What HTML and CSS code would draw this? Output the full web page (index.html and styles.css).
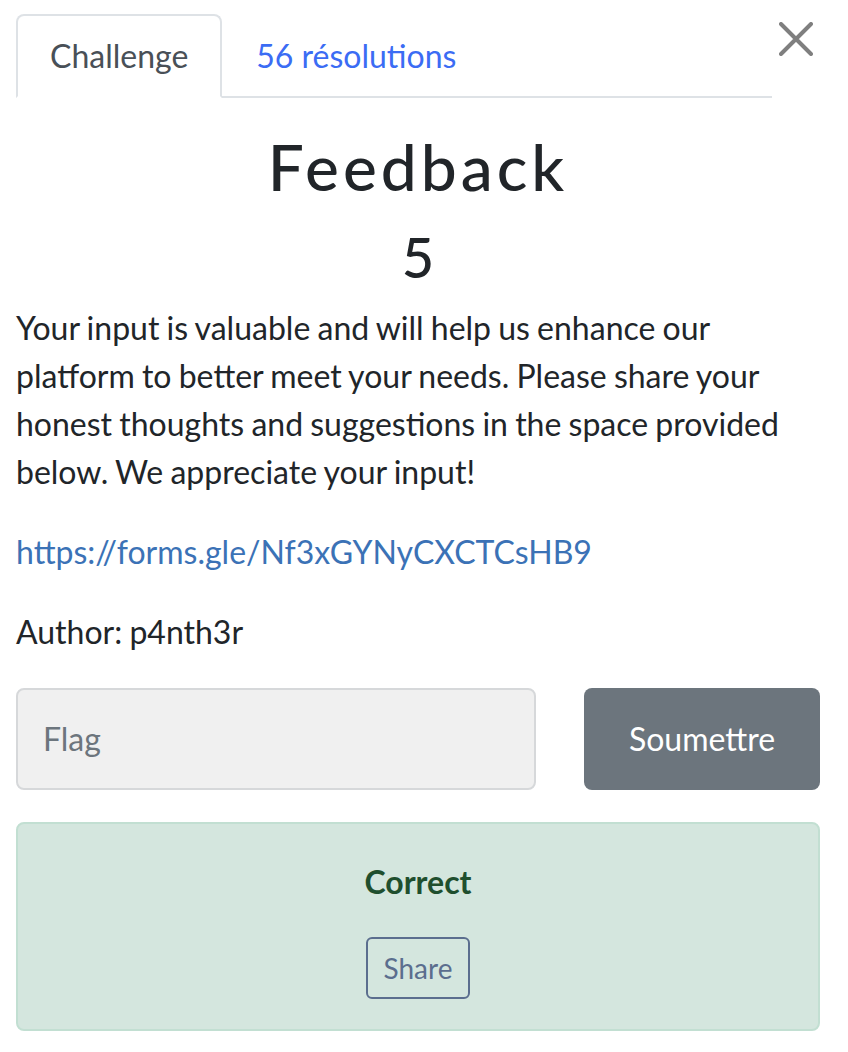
FILE: index.html
```html
<!DOCTYPE html>
<html lang="fr">
<head>
<meta charset="utf-8">
<title>Feedback</title>
<link rel="stylesheet" href="styles.css">
</head>
<body>
<div class="modal">
  <div class="top">
    <ul class="tabs">
      <li class="tab active">Challenge</li>
      <li class="tab link">56 résolutions</li>
    </ul>
    <button class="close" aria-label="Close">
      <svg width="34" height="34" viewBox="0 0 34 34"><path d="M2 2 L32 32 M32 2 L2 32" stroke="#7f7f7f" stroke-width="4" stroke-linecap="round" fill="none"/></svg>
    </button>
  </div>
  <h2 class="name">Feedback</h2>
  <h3 class="value">5</h3>
  <p>Your input is valuable and will help us enhance our platform to better meet your needs. Please share your honest thoughts and suggestions in the space provided below. We appreciate your input!</p>
  <p><a class="url" href="#">https://forms.gle/Nf3xGYNyCXCTCsHB9</a></p>
  <p>Author: p4nth3r</p>
  <div class="submit-row">
    <input class="flag" type="text" placeholder="Flag">
    <button class="submit">Soumettre</button>
  </div>
  <div class="alert">
    <strong class="correct">Correct</strong>
    <button class="share">Share</button>
  </div>
</div>
</body>
</html>
```

FILE: styles.css
```css
html, body {
  margin: 0;
  padding: 0;
  background: #ffffff;
}
body {
  font-family: Lato, "Open Sans", sans-serif;
  font-size: 32px;
  line-height: 1.5;
  color: #212529;
}
.modal {
  padding: 14px 28px 0 16px;
}
.top {
  display: flex;
  align-items: flex-start;
}
.tabs {
  flex: 1;
  display: flex;
  list-style: none;
  margin: 0;
  padding: 0;
  border-bottom: 2px solid #dee2e6;
}
.tab {
  padding: 16px 32px;
  margin-bottom: -2px;
  border: 2px solid transparent;
  border-radius: 8px 8px 0 0;
}
.tab.active {
  color: #495057;
  border-color: #dee2e6 #dee2e6 #ffffff;
}
.tab.link {
  color: #3b6cf4;
}
.close {
  background: none;
  border: 0;
  padding: 0;
  margin: 0;
  width: 48px;
  height: 50px;
  display: flex;
  align-items: center;
  justify-content: center;
}
.name {
  margin: 31px 0 0;
  text-align: center;
  font-size: 64px;
  font-weight: 500;
  line-height: 1.2;
  letter-spacing: 4px;
}
.value {
  margin: 17px 0 14px;
  text-align: center;
  font-size: 56px;
  font-weight: 500;
  line-height: 1.2;
}
p {
  margin: 0 0 32px;
  word-spacing: -1px;
}
.url {
  color: #3b72b6;
  text-decoration: none;
}
.submit-row {
  display: grid;
  grid-template-columns: 520px 236px;
  column-gap: 48px;
  margin-bottom: 32px;
}
.flag {
  box-sizing: border-box;
  height: 102px;
  padding: 0 25px;
  font-family: inherit;
  font-size: 32px;
  background: #f0f0f0;
  border: 2px solid #d6d8da;
  border-radius: 8px;
  color: #495057;
}
.flag::placeholder {
  color: #6c757d;
}
.submit {
  height: 102px;
  font-family: inherit;
  font-size: 32px;
  color: #ffffff;
  background: #6c757d;
  border: 0;
  border-radius: 8px;
}
.alert {
  box-sizing: border-box;
  width: 804px;
  height: 209px;
  background: #d4e6de;
  border: 2px solid #c2dfd2;
  border-radius: 8px;
  display: flex;
  flex-direction: column;
  align-items: center;
  padding-top: 34px;
}
.correct {
  color: #1f4f2e;
  font-weight: 700;
}
.share {
  margin-top: 31px;
  padding: 8px 16px;
  font-family: inherit;
  font-size: 28px;
  line-height: 1.5;
  color: #5b6e8e;
  background: transparent;
  border: 2px solid #5b6e8e;
  border-radius: 6px;
}
```
